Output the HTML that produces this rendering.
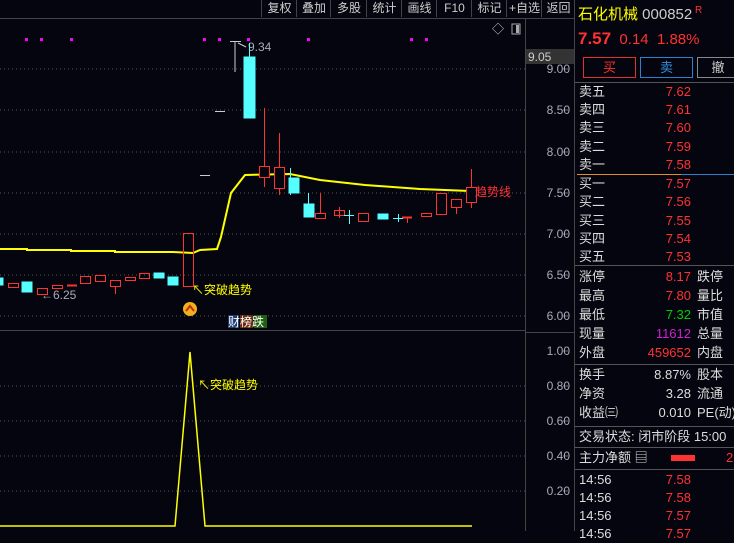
<!DOCTYPE html>
<html><head><meta charset="utf-8"><style>
body{margin:0;width:734px;height:531px;background:#05050f;overflow:hidden;font-family:"Liberation Sans","Noto Sans CJK SC",sans-serif;position:relative}
.a{position:absolute;white-space:nowrap}
.tb{position:absolute;top:0;height:17px;font-size:12px;color:#ccc;line-height:16px;text-align:center;border-left:1px solid #444}
.r{font-size:13px;line-height:18px}
.l{position:absolute;left:579px;color:#ddd}
.v{position:absolute;right:43px;text-align:right}
.l2{position:absolute;left:697px;color:#ddd}
.red{color:#ff3232}.grn{color:#00d000}.mag{color:#d020d0}.wh{color:#ddd}
.hl{position:absolute;left:575px;width:159px;height:1px;background:#555}
</style></head><body>
<svg width="734" height="531" style="position:absolute;left:0;top:0">
<g stroke="#555" stroke-dasharray="1 3">
<line x1="0" y1="69" x2="525" y2="69"/><line x1="0" y1="110" x2="525" y2="110"/><line x1="0" y1="152" x2="525" y2="152"/><line x1="0" y1="193" x2="525" y2="193"/><line x1="0" y1="234" x2="525" y2="234"/><line x1="0" y1="275" x2="525" y2="275"/><line x1="0" y1="316" x2="525" y2="316"/>
<line x1="0" y1="386" x2="525" y2="386"/><line x1="0" y1="421" x2="525" y2="421"/><line x1="0" y1="456" x2="525" y2="456"/><line x1="0" y1="491" x2="525" y2="491"/>
</g>
<line x1="0" y1="18.5" x2="574" y2="18.5" stroke="#444"/>
<line x1="0" y1="330.5" x2="525" y2="330.5" stroke="#444"/>
<line x1="525.5" y1="18" x2="525.5" y2="531" stroke="#444"/>
<line x1="574.5" y1="0" x2="574.5" y2="531" stroke="#444"/>
<line x1="525" y1="332.5" x2="574" y2="332.5" stroke="#444"/>
<g stroke="#666"><line x1="563" y1="69" x2="568" y2="69"/><line x1="563" y1="110" x2="568" y2="110"/><line x1="563" y1="152" x2="568" y2="152"/><line x1="563" y1="193" x2="568" y2="193"/><line x1="563" y1="234" x2="568" y2="234"/><line x1="563" y1="275" x2="568" y2="275"/><line x1="563" y1="316" x2="568" y2="316"/><line x1="563" y1="351" x2="568" y2="351"/><line x1="563" y1="386" x2="568" y2="386"/><line x1="563" y1="421" x2="568" y2="421"/><line x1="563" y1="456" x2="568" y2="456"/><line x1="563" y1="491" x2="568" y2="491"/></g>
<g fill="#f0f">
<rect x="25" y="38" width="3" height="3"/><rect x="40" y="38" width="3" height="3"/><rect x="70" y="38" width="3" height="3"/><rect x="203" y="38" width="3" height="3"/><rect x="218" y="38" width="3" height="3"/><rect x="247" y="38" width="3" height="3"/><rect x="307" y="38" width="3" height="3"/><rect x="410" y="38" width="3" height="3"/><rect x="425" y="38" width="3" height="3"/>
</g>
<g stroke="#ccc"><line x1="235" y1="41" x2="235" y2="72"/><line x1="230" y1="41.5" x2="241" y2="41.5"/><line x1="215" y1="111.5" x2="225" y2="111.5"/><line x1="200" y1="175.5" x2="210" y2="175.5"/><line x1="238" y1="43" x2="246" y2="47"/></g>
<text x="248" y="51" fill="#aab" font-size="12" font-family="Liberation Sans">9.34</text>
<polyline fill="none" stroke="#ffff00" stroke-width="2" points="0,249 27,249 27,250 71,250 71,251 115,251 115,252 173,252 193,253 200,250 217,249 221,237 231,193 245,175 290,174 320,180 365,185 420,189 470,191"/>
<g stroke="#ff3232" fill="none">
<rect x="8.5" y="283.5" width="10" height="4"/><rect x="37.5" y="288.5" width="10" height="6"/><rect x="52.5" y="285.5" width="10" height="3"/><line x1="67" y1="285.5" x2="77" y2="285.5" stroke-width="2"/><rect x="80.5" y="276.5" width="10" height="7"/><rect x="95.5" y="275.5" width="10" height="6"/><rect x="110.5" y="280.5" width="10" height="6"/><line x1="115.5" y1="286" x2="115.5" y2="294"/><rect x="125.5" y="277.5" width="10" height="3"/><rect x="139.5" y="273.5" width="10" height="5"/>
<rect x="183.5" y="233.5" width="10" height="53"/>
<line x1="264.5" y1="108" x2="264.5" y2="187"/><rect x="259.5" y="166.5" width="10" height="11" fill="#05050f"/>
<line x1="279.5" y1="133" x2="279.5" y2="195"/><rect x="274.5" y="167.5" width="10" height="21" fill="#05050f"/>
<line x1="320.5" y1="193" x2="320.5" y2="219"/><rect x="315.5" y="213.5" width="10" height="5" fill="#05050f"/>
<rect x="334.5" y="210.5" width="10" height="5"/><line x1="339.5" y1="207" x2="339.5" y2="218"/>
<rect x="358.5" y="213.5" width="10" height="8"/>
<line x1="402" y1="217.5" x2="412" y2="217.5" stroke-width="2"/><line x1="407.5" y1="217" x2="407.5" y2="223"/>
<rect x="421.5" y="213.5" width="10" height="3"/>
<rect x="436.5" y="193.5" width="10" height="21"/>
<rect x="451.5" y="199.5" width="10" height="8"/><line x1="456.5" y1="208" x2="456.5" y2="214"/>
<line x1="471.5" y1="169" x2="471.5" y2="208"/><rect x="466.5" y="187.5" width="10" height="15" fill="#05050f"/>
</g>
<g fill="#55ffff" stroke="#55ffff">
<rect x="0" y="278" width="3" height="7"/><rect x="22" y="282" width="10" height="10"/><rect x="154" y="273" width="10" height="5"/><rect x="168" y="277" width="10" height="8"/>
<line x1="249.5" y1="43" x2="249.5" y2="57"/><rect x="244" y="57" width="11" height="61"/>
<line x1="290.5" y1="168" x2="290.5" y2="195"/><rect x="289" y="178" width="10" height="15"/>
<line x1="308.5" y1="193" x2="308.5" y2="217"/><rect x="304" y="204" width="10" height="13"/>
<line x1="344" y1="215.5" x2="354" y2="215.5"/><line x1="349.5" y1="210" x2="349.5" y2="224"/>
<rect x="378" y="214" width="10" height="5"/>
<line x1="393" y1="218.5" x2="403" y2="218.5"/><line x1="398.5" y1="214" x2="398.5" y2="222"/>
</g>
<text x="41" y="299" fill="#aab" font-size="12">←6.25</text>
<text x="192" y="294" fill="#ffff00" font-size="12" font-family="Liberation Sans,Noto Sans CJK SC">↖突破趋势</text>
<circle cx="190" cy="309" r="7" fill="#f0b020"/><path d="M186 311 L190 306 L194 311" stroke="#c03000" stroke-width="2" fill="none"/>
<rect x="228" y="315" width="11" height="13" fill="#1a3a70"/><rect x="240" y="315" width="13" height="13" fill="#6a2a10"/><rect x="254" y="315" width="13" height="13" fill="#206010"/>
<text x="228" y="326" fill="#fff" font-size="12" font-family="Noto Sans CJK SC">财榜跌</text>
<text x="475" y="196" fill="#ff3232" font-size="12" font-family="Noto Sans CJK SC">趋势线</text>
<polyline fill="none" stroke="#ffff00" stroke-width="1.5" points="0,526 175,526 190,352 205,526 472,526"/>
<text x="198" y="389" fill="#ffff00" font-size="12" font-family="Liberation Sans,Noto Sans CJK SC">↖突破趋势</text>
<g fill="#aab" font-size="12" text-anchor="end">
<text x="570" y="73">9.00</text><text x="570" y="114">8.50</text><text x="570" y="156">8.00</text><text x="570" y="197">7.50</text><text x="570" y="238">7.00</text><text x="570" y="279">6.50</text><text x="570" y="320">6.00</text>
<text x="570" y="355">1.00</text><text x="570" y="390">0.80</text><text x="570" y="425">0.60</text><text x="570" y="460">0.40</text><text x="570" y="495">0.20</text>
</g>
<rect x="526" y="49" width="48" height="15" fill="#333"/><text x="528" y="61" fill="#ccc" font-size="12">9.05</text>
<text x="492" y="33" fill="#ccc" font-size="12">◇</text><rect x="512" y="24" width="8" height="10" fill="none" stroke="#aaa"/><rect x="516" y="25" width="3" height="8" fill="#aaa"/>
</svg>
<div class="tb" style="left:261px;width:35px">复权</div><div class="tb" style="left:296px;width:34px">叠加</div><div class="tb" style="left:330px;width:36px">多股</div><div class="tb" style="left:366px;width:35px">统计</div><div class="tb" style="left:401px;width:35px">画线</div><div class="tb" style="left:436px;width:35px">F10</div><div class="tb" style="left:471px;width:35px">标记</div><div class="tb" style="left:506px;width:35px">+自选</div><div class="tb" style="left:541px;width:33px">返回</div>
<div class="a" style="left:578px;top:3px;font-size:15px;color:#ffff00">石化机械 <span style="color:#ccc">000852</span><sup style="color:#ff3232;font-size:10px"> R</sup></div>
<div class="a" style="left:578px;top:29px;font-size:15px;color:#ff3232"><b style="font-size:17px">7.57</b>&nbsp; 0.14&nbsp; 1.88%</div>
<div class="a" style="left:583px;top:57px;width:51px;height:19px;border:1px solid #e03030;color:#ff3232;font-size:13px;text-align:center;line-height:19px">买</div>
<div class="a" style="left:640px;top:57px;width:51px;height:19px;border:1px solid #3080d0;color:#3090e0;font-size:13px;text-align:center;line-height:19px">卖</div>
<div class="a" style="left:697px;top:57px;width:40px;height:19px;border:1px solid #888;color:#ccc;font-size:13px;text-align:center;line-height:19px">撤</div>
<div class="hl" style="top:82px"></div>
<div class="r">
<div class="l" style="top:83px">卖五</div><div class="v red" style="top:83px">7.62</div>
<div class="l" style="top:101px">卖四</div><div class="v red" style="top:101px">7.61</div>
<div class="l" style="top:119px">卖三</div><div class="v red" style="top:119px">7.60</div>
<div class="l" style="top:138px">卖二</div><div class="v red" style="top:138px">7.59</div>
<div class="l" style="top:156px">卖一</div><div class="v red" style="top:156px">7.58</div>
<div class="a" style="left:577px;top:174px;width:104px;height:1px;background:#e09020"></div><div class="a" style="left:681px;top:174px;width:53px;height:1px;background:#3080d0"></div>
<div class="l" style="top:175px">买一</div><div class="v red" style="top:175px">7.57</div>
<div class="l" style="top:193px">买二</div><div class="v red" style="top:193px">7.56</div>
<div class="l" style="top:212px">买三</div><div class="v red" style="top:212px">7.55</div>
<div class="l" style="top:230px">买四</div><div class="v red" style="top:230px">7.54</div>
<div class="l" style="top:248px">买五</div><div class="v red" style="top:248px">7.53</div>
<div class="hl" style="top:265px"></div>
<div class="l" style="top:268px">涨停</div><div class="v red" style="top:268px">8.17</div><div class="l2" style="top:268px">跌停</div>
<div class="l" style="top:287px">最高</div><div class="v red" style="top:287px">7.80</div><div class="l2" style="top:287px">量比</div>
<div class="l" style="top:306px">最低</div><div class="v grn" style="top:306px">7.32</div><div class="l2" style="top:306px">市值</div>
<div class="l" style="top:325px">现量</div><div class="v mag" style="top:325px">11612</div><div class="l2" style="top:325px">总量</div>
<div class="l" style="top:344px">外盘</div><div class="v red" style="top:344px">459652</div><div class="l2" style="top:344px">内盘</div>
<div class="hl" style="top:364px"></div>
<div class="l" style="top:366px">换手</div><div class="v wh" style="top:366px">8.87%</div><div class="l2" style="top:366px">股本</div>
<div class="l" style="top:385px">净资</div><div class="v wh" style="top:385px">3.28</div><div class="l2" style="top:385px">流通</div>
<div class="l" style="top:404px">收益㈢</div><div class="v wh" style="top:404px">0.010</div><div class="l2" style="top:404px">PE(动)</div>
<div class="hl" style="top:426px"></div>
<div class="l" style="top:428px">交易状态: 闭市阶段 15:00</div>
<div class="hl" style="top:447px"></div>
<div class="l" style="top:449px">主力净额 ▤</div><div class="a" style="left:671px;top:455px;width:24px;height:6px;background:#ff3232"></div><div class="a red" style="left:726px;top:449px">2</div>
<div class="hl" style="top:469px"></div>
<div class="l" style="top:471px">14:56</div><div class="v red" style="top:471px">7.58</div>
<div class="l" style="top:489px">14:56</div><div class="v red" style="top:489px">7.58</div>
<div class="l" style="top:507px">14:56</div><div class="v red" style="top:507px">7.57</div>
<div class="l" style="top:525px">14:56</div><div class="v red" style="top:525px">7.57</div>
</div>
</body></html>
